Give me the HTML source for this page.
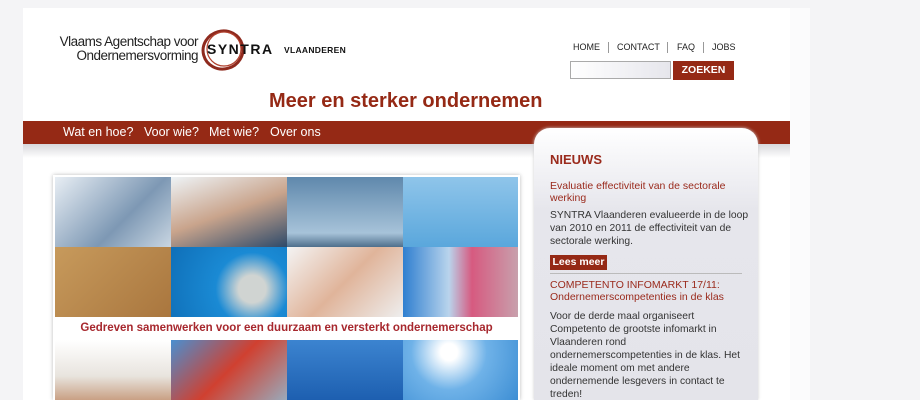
<!DOCTYPE html>
<html><head><meta charset="utf-8"><style>
*{margin:0;padding:0;box-sizing:border-box}
body{width:920px;height:400px;overflow:hidden;background:#f4f4f6;font-family:"Liberation Sans",sans-serif;position:relative}
.page{position:absolute;left:23px;top:8px;width:767px;height:392px;background:#fff}
.strip{position:absolute;left:790px;top:8px;width:20px;height:392px;background:#fbfbfc}
.abs{position:absolute}
.nav{left:23px;top:121px;width:767px;height:23px;background:#952915}
.nav span{position:absolute;top:4px;color:#fff;font-size:12.5px}
.shadow{left:23px;top:144px;width:767px;height:14px;background:linear-gradient(#d8d8dc,#fff)}
.top a{position:absolute;top:42px;font-size:9px;color:#222;text-decoration:none}
.sep{position:absolute;top:42px;width:1px;height:11px;background:#999}
.tile{position:absolute;width:116px;height:70px}
.side{left:534px;top:128px;width:224px;height:272px;border-radius:16px 16px 0 0;background:linear-gradient(#ffffff,#e6e6ec 30%,#e4e4ea);box-shadow:0 0 3px #ccc;overflow:hidden}
.side p{font-size:10.3px;line-height:13px;color:#333}
.red{color:#9a2a1c}
</style></head><body>
<div class="page"></div><div class="strip"></div>
<div class="abs" style="left:38px;top:35px;font-size:13.5px;line-height:14px;color:#222;text-align:right;width:160px;letter-spacing:-0.5px;white-space:nowrap">Vlaams Agentschap voor<br>Ondernemersvorming</div>
<svg class="abs" style="left:200px;top:28px" width="50" height="44"><ellipse cx="23" cy="22" rx="20" ry="19" fill="none" stroke="#8f2a1e" stroke-width="3" transform="rotate(-15 23 22)"/><ellipse cx="24" cy="21" rx="17" ry="17" fill="none" stroke="#b0402d" stroke-width="1.2"/></svg>
<div class="abs" style="left:207px;top:41px;font-size:14px;font-weight:bold;color:#111;letter-spacing:1.5px">SYNTRA</div>
<div class="abs" style="left:284px;top:45px;font-size:8.5px;font-weight:bold;color:#111;letter-spacing:0.3px">VLAANDEREN</div>
<div class="top">
<a style="left:573px">HOME</a><div class="sep" style="left:608px"></div>
<a style="left:617px">CONTACT</a><div class="sep" style="left:667px"></div>
<a style="left:677px">FAQ</a><div class="sep" style="left:703px"></div>
<a style="left:712px">JOBS</a></div>
<div class="abs" style="left:570px;top:61px;width:101px;height:18px;border:1px solid #aaa;background:linear-gradient(90deg,#fff,#e6e6ec)"></div>
<div class="abs" style="left:673px;top:61px;width:61px;height:19px;background:#952915;color:#fff;font-size:10.5px;font-weight:bold;text-align:center;line-height:19px">ZOEKEN</div>
<div class="abs red" style="left:269px;top:90px;font-size:20px;font-weight:bold;color:#952915">Meer en sterker ondernemen</div>
<div class="abs nav"><span style="left:40px">Wat en hoe?</span><span style="left:121px">Voor wie?</span><span style="left:186px">Met wie?</span><span style="left:247px">Over ons</span></div>
<div class="abs shadow"></div>
<div class="abs" style="left:53px;top:175px;width:467px;height:225px;box-shadow:0 0 4px #bbb;background:#fff"></div>
<div class="tile" style="left:55px;top:177px;background:linear-gradient(135deg,#e8eef4,#7d98b4 60%,#c9d6e2)"></div>
<div class="tile" style="left:171px;top:177px;background:linear-gradient(160deg,#eef3f6,#c9a48c 50%,#2e4a6a)"></div>
<div class="tile" style="left:287px;top:177px;background:linear-gradient(#5f88ac,#a7c3d9 80%,#4e6f8c)"></div>
<div class="tile" style="left:403px;top:177px;width:115px;background:linear-gradient(#8fc5ea,#5aa7dc);"></div>
<div class="tile" style="left:55px;top:247px;background:linear-gradient(135deg,#c79a5c,#a9763e)"></div>
<div class="tile" style="left:171px;top:247px;background:radial-gradient(circle at 70% 60%,#d0d4d2 15%,#1a8ad4 40%,#0f6fb8)"></div>
<div class="tile" style="left:287px;top:247px;background:linear-gradient(135deg,#f4f4f4,#e0b49a 50%,#eee)"></div>
<div class="tile" style="left:403px;top:247px;width:115px;background:linear-gradient(90deg,#2f7fd0,#b9d4ec 40%,#d65a80 60%,#c8a0ac)"></div>
<div class="abs" style="left:55px;top:317px;width:463px;height:23px;background:#fff;color:#a7282e;font-size:11.5px;font-weight:bold;text-align:center;line-height:23px">Gedreven samenwerken voor een duurzaam en versterkt ondernemerschap</div>
<div class="tile" style="left:55px;top:340px;height:60px;background:linear-gradient(#fff,#e8e4de 60%,#c9a084)"></div>
<div class="tile" style="left:171px;top:340px;height:60px;background:linear-gradient(135deg,#4a8fd0,#d04030 50%,#9ab)"></div>
<div class="tile" style="left:287px;top:340px;height:60px;background:linear-gradient(#3c84d0,#1d5fb0)"></div>
<div class="tile" style="left:403px;top:340px;width:115px;height:60px;background:radial-gradient(circle at 40% 20%,#fff 10%,#6fb2e8 45%,#3d8ed4)"></div>
<div class="abs side">
<div class="abs red" style="left:16px;top:24px;font-size:13px;font-weight:bold">NIEUWS</div>
<div class="abs red" style="left:16px;top:53px;width:200px;font-size:10.5px;line-height:11.5px">Evaluatie effectiviteit van de sectorale werking</div>
<p class="abs" style="left:16px;top:81px;width:205px">SYNTRA Vlaanderen evalueerde in de loop van 2010 en 2011 de effectiviteit van de sectorale werking.</p>
<div class="abs" style="left:16px;top:127px;width:57px;height:15px;background:#952915;color:#fff;font-size:10.5px;font-weight:bold;text-align:center;line-height:15px">Lees meer</div>
<div class="abs" style="left:16px;top:145px;width:192px;height:1px;background:#bbb"></div>
<div class="abs red" style="left:16px;top:152px;width:205px;font-size:10.5px;line-height:11.5px">COMPETENTO INFOMARKT 17/11: Ondernemerscompetenties in de klas</div>
<p class="abs" style="left:16px;top:182px;width:194px">Voor de derde maal organiseert Competento de grootste infomarkt in Vlaanderen rond ondernemerscompetenties in de klas. Het ideale moment om met andere ondernemende lesgevers in contact te treden!</p>
</div>
</body></html>
